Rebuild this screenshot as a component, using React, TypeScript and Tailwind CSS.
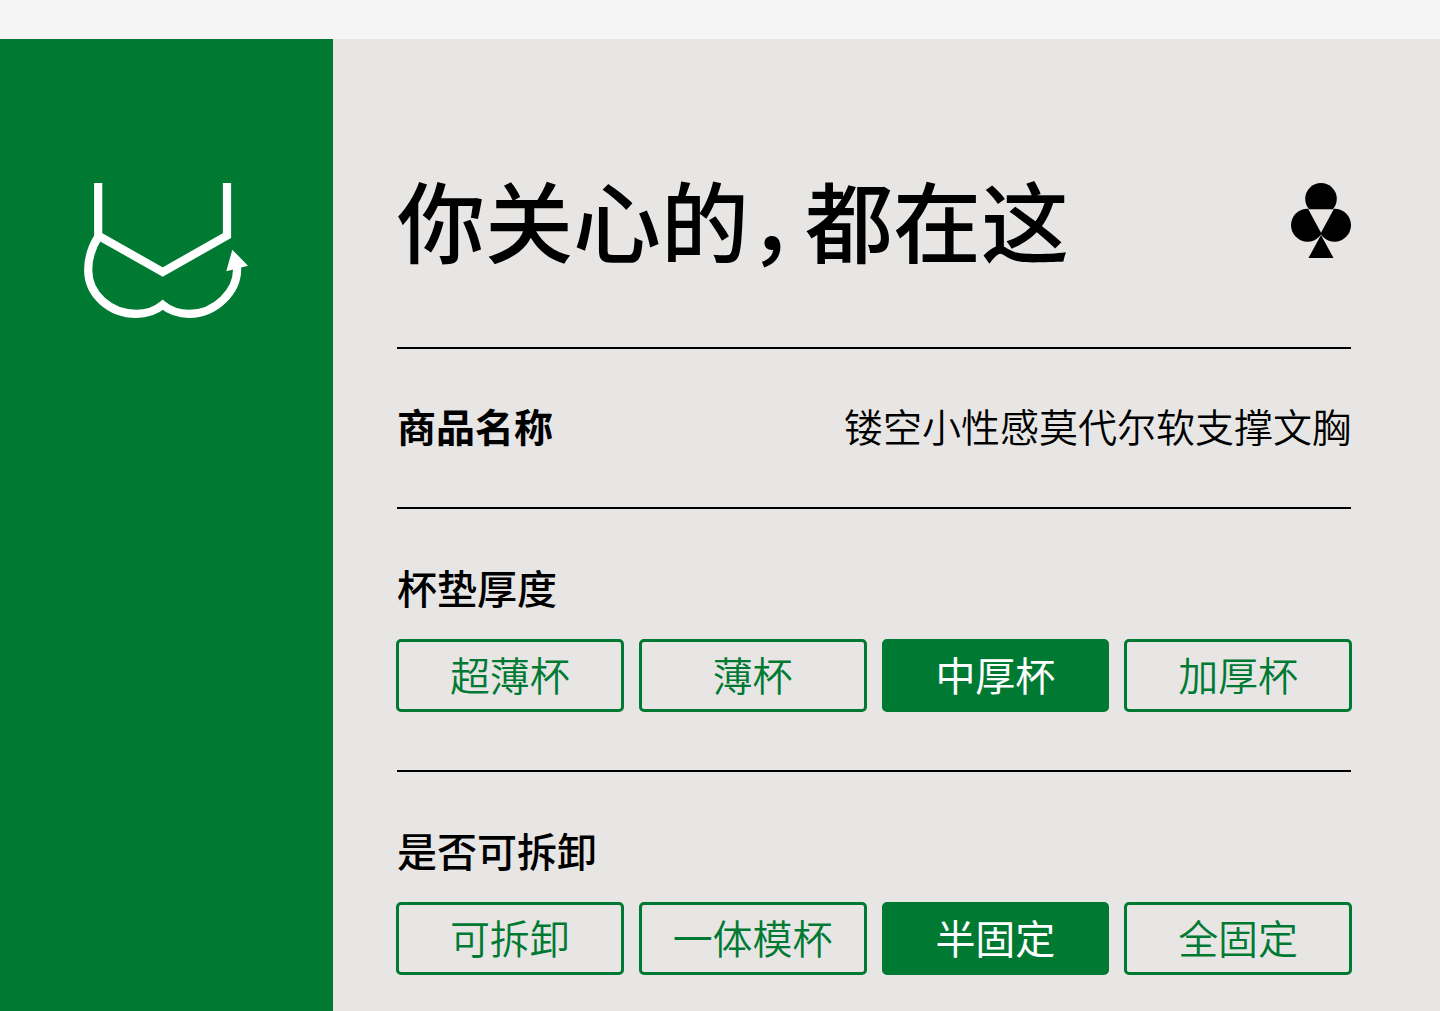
import { useState } from "react";

const BraIcon = () => (
  <svg
    viewBox="0 0 164 135"
    fill="none"
    stroke="#fff"
    strokeWidth="8.2"
    className="w-[164px] h-[135px]"
    aria-hidden="true"
  >
    <path d="M14.2 0V52.6L78.7 89L143 52.6V0" />
    <path d="M14.4 53.5C8 63.5 4.2 74.5 4.2 87C4.2 111.5 26 130.8 52.3 130.8C62.5 130.8 71.5 127.8 78.7 121.8C86 127.8 95 130.8 105.2 130.8C131 130.8 154.5 108.5 153 84" />
    <path d="M148.3 66.7L164 82.7L142.3 88.3Z" fill="#fff" stroke="none" />
  </svg>
);

const ClubIcon = () => (
  <svg viewBox="0 0 60 75" className="w-[60px] h-[75px]" aria-hidden="true">
    <circle cx="30" cy="15.8" r="15.8" />
    <circle cx="16.5" cy="42.2" r="16.5" />
    <circle cx="43.5" cy="42.2" r="16.5" />
    <path d="M17.3 26.3H42.7L30 49.7Z" fill="#e7e6e4" />
    <path d="M30 52L42.5 75H17.5Z" />
  </svg>
);

type OptionGroupProps = {
  title: string;
  options: string[];
  defaultValue: string;
};

const OptionGroup = ({ title, options, defaultValue }: OptionGroupProps) => {
  const [selected, setSelected] = useState(defaultValue);

  return (
    <section className="pt-[50px] pb-[58px]">
      <h2 className="text-[40px] leading-[56px] font-medium">{title}</h2>

      <div className="grid grid-cols-4 gap-[15px] mt-6 -mx-px">
        {options.map((option) => (
          <button
            key={option}
            type="button"
            aria-pressed={selected === option}
            onClick={() => setSelected(option)}
            className={`h-[73px] flex items-center justify-center pb-1 rounded-[5px] border-3 border-[#007a33] text-[40px] leading-[56px] ${
              selected === option
                ? "bg-[#007a33] text-white font-normal"
                : "text-[#007a33] font-[350]"
            }`}
          >
            {option}
          </button>
        ))}
      </div>
    </section>
  );
};

export default function App() {
  return (
    <div className="min-h-screen flex flex-col bg-[#f5f5f5] text-black font-['Noto_Sans_CJK_SC',sans-serif]">
      {/* top strip */}
      <div className="h-[39px]" />

      <div className="flex flex-1">
        {/* left side */}
        <aside className="w-[333px] shrink-0 pt-36 pl-[84px] bg-[#007a33]">
          <BraIcon />
        </aside>

        {/* right side */}
        <main className="flex-1 pl-16 pr-[89px] bg-[#e7e6e4]">
          <header className="flex items-start justify-between pt-[120px] pb-[70px] border-b-2 border-black">
            <h1 className="text-[88px] leading-[118px] font-medium [font-feature-settings:'halt']">
              你关心的<span className="mr-3">，</span>都在这
            </h1>
            <div className="pt-6">
              <ClubIcon />
            </div>
          </header>

          {/* product name */}
          <dl className="flex items-center justify-between h-40 pb-1.5 border-b-2 border-black text-[39px] leading-[56px]">
            <dt className="font-bold">商品名称</dt>
            <dd className="font-[350]">镂空小性感莫代尔软支撑文胸</dd>
          </dl>

          <OptionGroup
            title="杯垫厚度"
            options={["超薄杯", "薄杯", "中厚杯", "加厚杯"]}
            defaultValue="中厚杯"
          />
          <hr className="border-t-2 border-black" />
          <OptionGroup
            title="是否可拆卸"
            options={["可拆卸", "一体模杯", "半固定", "全固定"]}
            defaultValue="半固定"
          />
        </main>
      </div>
    </div>
  );
}
